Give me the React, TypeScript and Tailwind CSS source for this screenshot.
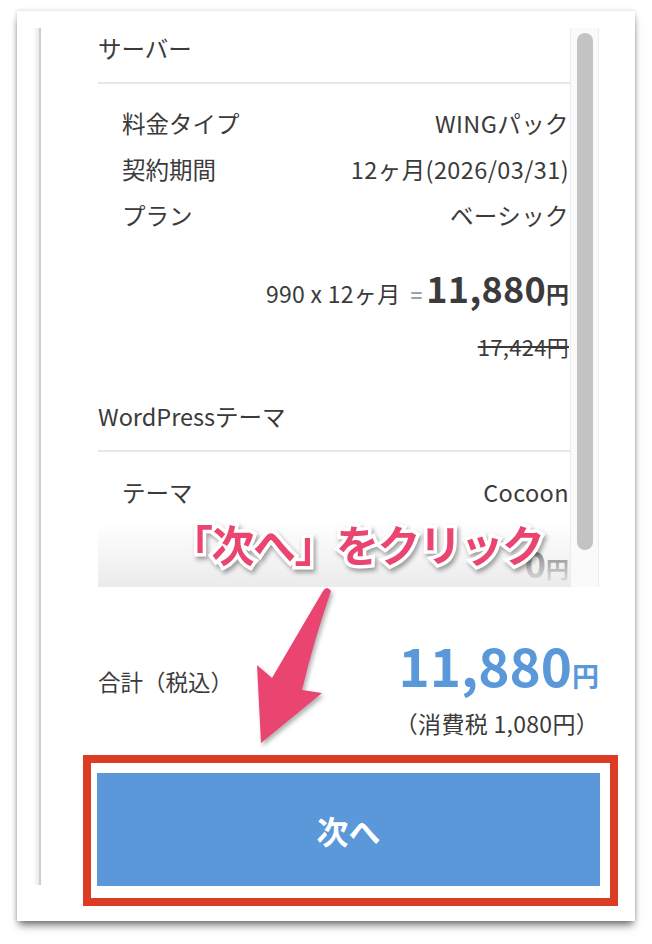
import React from 'react';

const serverRows = [
  ['料金タイプ', 'WINGパック'],
  ['契約期間', '12ヶ月(2026/03/31)'],
  ['プラン', 'ベーシック'],
];

const themeRows = [['テーマ', 'Cocoon']];

const SectionHeader: React.FC<{ title: string; className?: string }> = ({ title, className }) => (
  <div className={`pt-[6px] pb-[20px] border-b-2 border-[#e6e6e6] text-[23.5px] leading-[28px] ${className ?? ''}`}>
    {title}
  </div>
);

const DetailRow: React.FC<{ label: string; value: string }> = ({ label, value }) => (
  <div className="h-[46px] flex items-center justify-between pl-[24px] pr-[1px] text-[23.5px]">
    <span>{label}</span>
    <span className="tracking-[0.4px]">{value}</span>
  </div>
);

const App: React.FC = () => {
  return (
    <div className="relative w-[652px] h-[944px] bg-white overflow-hidden pt-[11px] pl-[17px] font-['Noto_Sans_CJK_JP','Noto_Sans',sans-serif] text-[#3b3b3b]">
      {/* screenshot card */}
      <div className="w-[618px] h-[910px] bg-white shadow-[0_6px_8px_-2px_rgba(0,0,0,0.55),0_0_4px_rgba(0,0,0,0.18)] pt-[17px] flex">
        {/* left edge of the modal */}
        <div className="ml-[16px] w-[8px] h-[857px] bg-gradient-to-r from-transparent to-[#e9e9e9] border-r-2 border-[#cdcdcd]" />

        <div className="ml-[57px] w-[501px] flex flex-col">
          {/* scrolling order details */}
          <div className="h-[559px] flex">
            <div className="relative flex-1 overflow-hidden">
              <SectionHeader title="サーバー" />
              <div className="pt-[17px]">
                {serverRows.map(([label, value]) => (
                  <DetailRow key={label} label={label} value={value} />
                ))}
              </div>
              <div className="mt-[30px] h-[40px] flex items-baseline justify-end pr-[1px] leading-none">
                <span className="text-[23px] tracking-[0.3px]">990 x 12ヶ月</span>
                <span className="ml-[10px] mr-[4px] text-[20px] font-bold text-[#a0a0a0]">=</span>
                <span className="text-[36px] font-bold tracking-[0.3px]">11,880</span>
                <span className="text-[23px] font-bold">円</span>
              </div>
              <div className="mt-[22px] h-[30px] flex items-center justify-end pr-[1px]">
                <span className="text-[22px] tracking-[0.3px] line-through decoration-[1.5px]">17,424円</span>
              </div>

              <SectionHeader title="WordPressテーマ" className="mt-[35px]" />
              <div className="pt-[18px]">
                {themeRows.map(([label, value]) => (
                  <DetailRow key={label} label={label} value={value} />
                ))}
              </div>
              <div className="mt-[28px] h-[40px] flex items-baseline justify-end pr-[1px] leading-none">
                <span className="text-[36px] font-bold">0</span>
                <span className="text-[23px] font-bold">円</span>
              </div>

              {/* fade at the bottom of the scroll box */}
              <div className="absolute left-0 right-0 bottom-0 h-[65px] bg-gradient-to-b from-white/0 to-[#ebebeb]" />
            </div>

            {/* scrollbar */}
            <div className="w-[29px] bg-[#fafafa] border-l border-r border-[#ececec] pt-[5px]">
              <div className="mx-auto w-[16px] h-[517px] rounded-full bg-[#c3c3c3]" />
            </div>
          </div>

          {/* total */}
          <div className="pt-[45px] flex items-center justify-between">
            <span className="text-[22.5px] mt-[-6px]">合計（税込）</span>
            <div className="flex flex-col items-end">
              <div className="h-[60px] flex items-baseline leading-none text-[#5a98da] font-bold pt-[6px]">
                <span className="text-[53px]">11,880</span>
                <span className="text-[27px]">円</span>
              </div>
              <span className="mt-[16px] text-[23px] leading-[30px] tracking-[0.3px]">（消費税 1,080円）</span>
            </div>
          </div>

          {/* next button */}
          <div className="relative mt-[35px]">
            <button className="w-[503px] -ml-[1px] h-[113px] bg-[#5b98d9] text-white text-[32px] font-bold">
              次へ
            </button>
            <div className="absolute -left-[15px] -right-[19px] -top-[18px] -bottom-[20px] border-[8px] border-[#dc3b24]" />
          </div>
        </div>
      </div>

      {/* annotation */}
      <div className="absolute left-[170px] top-[514px] text-[43px] leading-[58px] font-bold tracking-[-1.5px] text-[#ea4571] [paint-order:stroke_fill] [-webkit-text-stroke:7px_white] drop-shadow-[2px_3px_2px_rgba(0,0,0,0.35)]">
        「次へ」をクリック
      </div>
      <svg className="absolute left-0 top-0 drop-shadow-[2px_3px_2px_rgba(0,0,0,0.3)]" width="652" height="944" viewBox="0 0 652 944">
        <path
          d="M323 591 Q327 585 331 591 Q314 640 302 690 L322 693 L261 743 L257 665 L272 678 Q300 630 323 591 Z"
          fill="#ea4571"
        />
      </svg>
    </div>
  );
};

export default App;
